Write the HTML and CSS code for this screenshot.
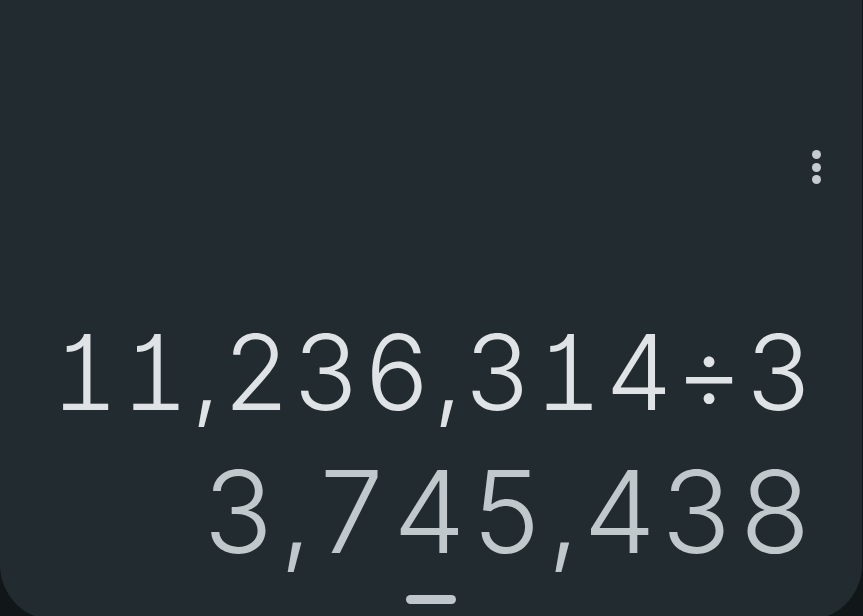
FILE: index.html
```html
<!DOCTYPE html>
<html>
<head>
<meta charset="utf-8">
<link rel="stylesheet" href="styles.css">
</head>
<body>
<div class="panel">
  <div class="toolbar">
    <div class="menu"><span class="dot"></span><span class="dot"></span><span class="dot"></span></div>
  </div>
  <div class="display">
    <div class="formula">11,236,314÷3</div>
    <div class="result">3,745,438</div>
  </div>
  <div class="handle-row"><div class="handle"></div></div>
</div>
</body>
</html>
```

FILE: styles.css
```css
html, body {
  margin: 0;
  padding: 0;
  background: #111618;
  overflow: hidden;
}
body {
  width: 863px;
  height: 616px;
}
.panel {
  width: 862px;
  height: 620px;
  background: #222b30;
  border-radius: 0 0 55px 55px;
  display: flex;
  flex-direction: column;
  font-family: Inter, "DejaVu Sans", sans-serif;
  font-weight: 300;
  font-feature-settings: "cv01" 1, "tnum" 1;
}
.toolbar {
  height: 192px;
  display: flex;
  justify-content: flex-end;
  align-items: flex-start;
  padding-top: 150px;
  box-sizing: border-box;
  padding-right: 41px;
}
.menu {
  display: flex;
  flex-direction: column;
  gap: 3.5px;
}
.dot {
  width: 9px;
  height: 9px;
  border-radius: 50%;
  background: #c5cbce;
}
.display {
  display: flex;
  flex-direction: column;
  align-items: flex-end;
  padding-right: 46px;
  padding-top: 130px;
}
.formula {
  font-size: 104px;
  line-height: 100px;
  color: #e0e3e5;
  letter-spacing: 3px;
}
.result {
  font-size: 114px;
  line-height: 150px;
  margin-top: 15px;
  color: #c1c8cb;
  letter-spacing: 4px;
}
.handle-row {
  display: flex;
  justify-content: center;
  margin-top: 8px;
}
.handle {
  width: 50px;
  height: 9px;
  border-radius: 5px;
  background: #c0c7ca;
}
```
